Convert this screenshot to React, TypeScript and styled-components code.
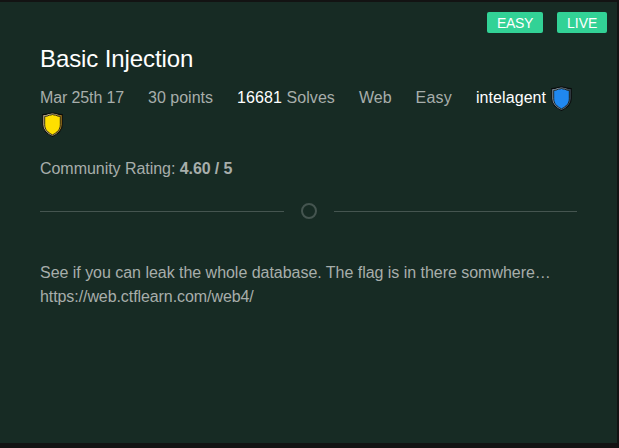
import React from 'react';
import styled, { createGlobalStyle } from 'styled-components';

const GlobalStyle = createGlobalStyle`
  * { box-sizing: border-box; }
  body {
    margin: 0;
    background: #131313;
    color: #a7aeab;
    font: 16px/24px "Liberation Sans", Arial, sans-serif;
    overflow: hidden;
  }
`;

const Card = styled.article`
  position: relative;
  width: 617px;
  height: 441px;
  margin-top: 2px;
  padding: 40px;
  background: #172b24;
`;

const Badges = styled.div`
  position: absolute;
  top: 10px;
  right: 10px;
  display: flex;
  gap: 14px;
`;

const Badge = styled.span<{ $width: number; $tracking?: number }>`
  width: ${(p) => p.$width}px;
  height: 21px;
  padding-left: 10px;
  border-radius: 2px;
  background: #32d296;
  color: #fff;
  font-size: 14px;
  line-height: 22px;
  letter-spacing: ${(p) => p.$tracking ?? 0}px;
`;

const Title = styled.h3`
  margin: 0;
  color: #fff;
  font-size: 24px;
  font-weight: 400;
  line-height: 34px;
  letter-spacing: -0.1px;
`;

const Meta = styled.ul`
  display: flex;
  gap: 24px;
  height: 24px;
  margin: 10px 0 0;
  padding: 0;
  list-style: none;
  white-space: nowrap;
`;

const MetaItem = styled.li<{ $tracking?: number }>`
  letter-spacing: ${(p) => p.$tracking ?? 0}px;
`;

const Strong = styled.span`
  color: #fff;
`;

const Author = styled(MetaItem)`
  display: flex;
  gap: 3px;
  color: #fff;
`;

const Awards = styled.div`
  display: flex;
  height: 24px;
  margin: 2px 0 0;
`;

const ShieldSvg = styled.svg`
  display: block;
  flex: none;
  width: 25px;
  height: 27px;
  margin-top: -1px;
`;

const Rating = styled.p`
  margin: 21px 0 0;
  letter-spacing: -0.04px;

  b {
    letter-spacing: -0.12px;
  }
`;

const Divider = styled.div`
  display: flex;
  align-items: center;
  height: 20px;
  margin: 20px 0 0;
`;

const Rule = styled.span`
  flex: 1;
  height: 1px;
  background: #455550;
`;

const Ring = styled.svg`
  width: 50px;
  height: 20px;
`;

const Description = styled.p`
  margin: 40px 0 0;
  letter-spacing: -0.03px;
`;

const Link = styled.span`
  letter-spacing: -0.08px;
`;

function Shield({ fill, light, dark }: { fill: string; light: string; dark: string }) {
  const gradient = `rim-${fill.slice(1)}`;
  return (
    <ShieldSvg viewBox="0 0 24 26">
      <defs>
        <linearGradient id={gradient} x1="0" y1="0" x2="1" y2="0">
          <stop offset="0" stopColor={light} />
          <stop offset=".45" stopColor={light} />
          <stop offset="1" stopColor={dark} />
        </linearGradient>
      </defs>
      <path
        d="M2.6 3.5 Q6 3.5 8.2 2.4 Q10.5 2.4 12 1.7 Q13.5 2.4 15.8 2.4 Q18 3.5 21.4 3.5 V13 C21.4 19 17.5 22 12 24.6 C6.5 22 2.6 19 2.6 13 Z"
        fill={`url(#${gradient})`}
        stroke="#080b0b"
        strokeWidth="1"
      />
      <path
        d="M4.5 5.2 Q7 5.2 9 4 Q10.8 4 12 3.4 Q13.2 4 15 4 Q17 5.2 19.5 5.2 V13 C19.5 18 16.5 20.6 12 23 C7.5 20.6 4.5 18 4.5 13 Z"
        fill={fill}
        stroke="#15160d"
        strokeWidth=".8"
      />
    </ShieldSvg>
  );
}

export default function App() {
  return (
    <>
      <GlobalStyle />
      <Card>
        <Badges>
          <Badge $width={56} $tracking={-0.3}>EASY</Badge>
          <Badge $width={50}>LIVE</Badge>
        </Badges>
        <Title>Basic Injection</Title>
        <Meta>
          <MetaItem $tracking={-0.12}>Mar 25th 17</MetaItem>
          <MetaItem>30 points</MetaItem>
          <MetaItem $tracking={0.08}><Strong>16681</Strong> Solves</MetaItem>
          <MetaItem>Web</MetaItem>
          <MetaItem $tracking={0.2}>Easy</MetaItem>
          <Author $tracking={0.08}>
            intelagent <Shield fill="#2088f0" light="#8495a5" dark="#38444e" />
          </Author>
        </Meta>
        <Awards>
          <Shield fill="#ffdf00" light="#cbb890" dark="#a87814" />
        </Awards>
        <Rating>Community Rating: <b>4.60 / 5</b></Rating>
        <Divider>
          <Rule />
          <Ring viewBox="0 0 50 20">
            <circle cx="25" cy="10" r="7" fill="none" stroke="#455550" strokeWidth="2" />
          </Ring>
          <Rule />
        </Divider>
        <Description>
          See if you can leak the whole database. The flag is in there somwhere…
          <br />
          <Link>https://web.ctflearn.com/web4/</Link>
        </Description>
      </Card>
    </>
  );
}
